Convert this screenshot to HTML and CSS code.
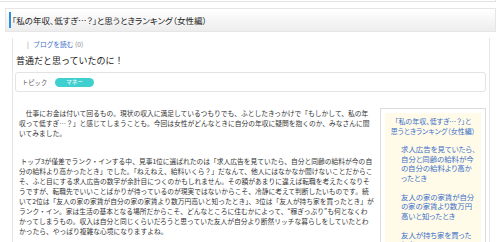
FILE: index.html
```html
<!DOCTYPE html>
<html lang="ja">

<head>
    <meta charset="UTF-8" />
    <meta name="viewport" content="width=device-width, initial-scale=1.0" />
    <title>普通だと思っていたのに！</title>
    <link rel="stylesheet" href="styles.css">
</head>

<body>
    <div class="topbar"></div>

    <div class="page-title">
        <h1>「私の年収、低すぎ…？」と思うときランキング（女性編）</h1>
    </div>

    <div class="entry">
        <div class="meta">
            <span class="sep">|</span>
            <a href="#">ブログを読む</a>
            <span class="count">(0)</span>
        </div>
        <h2>普通だと思っていたのに！</h2>
        <div class="topic">
            <span class="topic-label">トピック</span>
            <span class="topic-tag">マネー</span>
        </div>

        <div class="entry-body">
            <div class="entry-text">
                <p>　仕事にお金は付いて回るもの。現状の収入に満足しているつもりでも、ふとしたきっかけで「もしかして、私の年収って低すぎ…？」と感じてしまうことも。今回は女性がどんなときに自分の年収に疑問を抱くのか、みなさんに聞いてみました。</p>
                <p>&nbsp;トップ3が僅差でランク・インする中、見事1位に選ばれたのは「求人広告を見ていたら、自分と同齢の給料が今の自分の給料より高かったとき」でした。「ねえねえ、給料いくら？」だなんて、他人にはなかなか聞けないことだからこそ、ふと目にする求人広告の数字が余計目につくのかもしれません。その額があまりに違えば転職を考えたくなりそうですが、転職先でいいことばかりが待っているのが現実ではないからこそ、冷静に考えて判断したいものです。続いて2位は「友人の家の家賃が自分の家の家賃より数万円高いと知ったとき」、3位は「友人が持ち家を買ったとき」がランク・イン。家は生活の基本となる場所だからこそ、どんなところに住むかによって、“稼ぎっぷり”も何となくわかってしまうもの。収入は自分と同じくらいだろうと思っていた友人が自分より断然リッチな暮らしをしていたとわかったら、やっぱり複雑な心境になりますよね。</p>
            </div>

            <div class="side">
                <div class="side-inner">
                    <p class="side-title">「私の年収、低すぎ…？」と<br>思うときランキング（女性編）</p>
                    <ul class="side-list">
                        <li>求人広告を見ていたら、自分と同齢の給料が今の自分の給料より高かったとき</li>
                        <li>友人の家の家賃が自分の家の家賃より数万円高いと知ったとき</li>
                        <li>友人が持ち家を買ったとき</li>
                    </ul>
                </div>
            </div>
        </div>
    </div>
</body>

</html>
```

FILE: styles.css
```css
* {
    box-sizing: border-box;
}

body {
    margin: 0;
    background: #fff;
    color: #333;
    font-family: "Noto Sans CJK JP", "Liberation Sans", sans-serif;
}

a {
    color: #3c6fc8;
    text-decoration: none;
}

.topbar {
    width: 496px;
    height: 2px;
    border-bottom: 1px solid #e2e2e2;
    border-right: 1px solid #e2e2e2;
}

.page-title {
    margin: 6px 4px 0 5px;
    height: 24px;
    padding: 3px 0 0 3px;
    border: 1px solid #e6e6e6;
    background: linear-gradient(#fff, #ededed);
}

.page-title h1 {
    margin: 0;
    padding-left: 1px;
    border-left: 2px solid #2d8ee0;
    font-size: 8.5px;
    line-height: 16px;
    font-weight: normal;
    color: #222;
    font-feature-settings: "palt";
}

.entry {
    margin: 6px 10px 0 12px;
    border-left: 1px solid #e6e6e6;
    border-right: 1px solid #e6e6e6;
}

.meta {
    padding: 1px 0 0 14px;
    font-size: 6.7px;
    line-height: 10px;
    color: #888;
}

.meta .sep {
    margin-right: 3px;
}

.entry h2 {
    margin: 5px 0 0 3px;
    font-size: 9px;
    line-height: 14px;
    font-weight: normal;
    color: #222;
}

.topic {
    margin: 4px 3px 0 2px;
    height: 20px;
    padding-left: 6px;
    border: 1px solid #e3e3e3;
    border-radius: 3px;
    display: flex;
    align-items: center;
}

.topic-label {
    width: 33px;
    font-size: 6.3px;
    color: #555;
}

.topic-tag {
    width: 39px;
    height: 9px;
    border-radius: 5px;
    background: #3fcfcf;
    color: #fff;
    font-size: 5.5px;
    line-height: 9px;
    text-align: center;
}

.entry-body {
    margin-top: 16px;
    padding: 0 3px 0 6px;
    display: flex;
    gap: 6px;
    align-items: flex-start;
}

.entry-text {
    flex: 1;
    font-size: 6.75px;
    line-height: 10px;
}

.entry-text p {
    margin: 0;
}

.entry-text p + p {
    margin-top: 18px;
}

.side {
    width: 106px;
    padding: 4px;
    border: 1px solid #dcdcdc;
}

.side-inner {
    background: #fffbe8;
    padding: 4px 3px 10px 3px;
    color: #3c6fc8;
    font-size: 7.4px;
    line-height: 9.5px;
    font-feature-settings: "palt";
}

.side-title {
    margin: 0;
    font-size: 7px;
    text-align: center;
}

.side-list {
    margin: 8px 0 0 0;
    padding: 0 2px 0 13px;
    list-style: none;
}

.side-list li {
    margin-bottom: 9.5px;
}
```
